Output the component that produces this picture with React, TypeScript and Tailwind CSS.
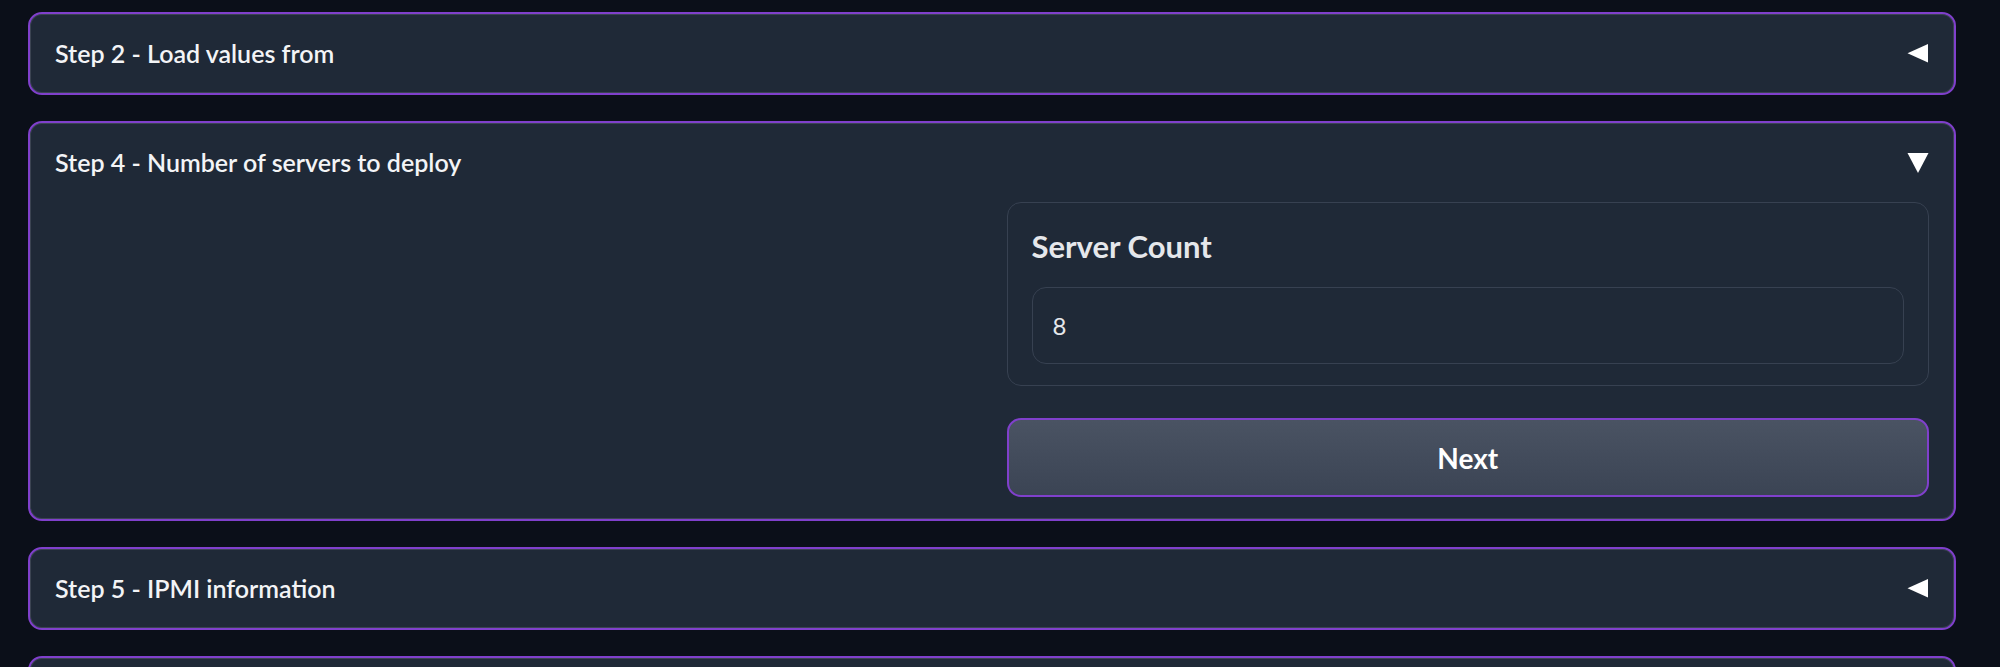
import React from "react";

function Collapsed({ title }: { title?: string }) {
  return (
    <div className="flex h-[83px] items-center justify-between rounded-[14px] border-2 border-[#8040cc] bg-[#1f2937] pl-[25px] pr-[25px] shadow-[inset_0_0_0_1px_#3b4452]">
      <span className="text-[25px] font-semibold text-[#f3f4f6]">{title}</span>
      <svg width="22" height="19" viewBox="0 0 22 19">
        <polygon points="21,0 21,18.5 0.5,9.25" fill="#ffffff" />
      </svg>
    </div>
  );
}

export default function App() {
  return (
    <div className="h-[667px] overflow-hidden bg-[#0b0f19] pl-[28px] pr-[44px] pt-[12px] font-['Lato',sans-serif]">
      <div className="flex flex-col gap-[26px]">
        <Collapsed title="Step 2 - Load values from" />

        <div className="rounded-[14px] border-2 border-[#8040cc] bg-[#1f2937] px-[25px] pb-[22px] shadow-[inset_0_0_0_1px_#3b4452]">
          <div className="flex h-[79px] items-center justify-between">
            <span className="text-[25px] font-semibold text-[#f3f4f6]">Step 4 - Number of servers to deploy</span>
            <svg width="22" height="20" viewBox="0 0 22 20">
              <polygon points="0.5,0 21.5,0 11,20" fill="#ffffff" />
            </svg>
          </div>
          <div className="grid grid-cols-2 gap-[29px]">
            <div />
            <div className="flex flex-col gap-[32px]">
              <div className="rounded-[14px] border border-[#374151] bg-[#1f2937] px-[24px] pb-[21px] pt-[22px]">
                <div className="mb-[20px] text-[31px] font-bold leading-[42px] text-[#e5e7eb]">Server Count</div>
                <div className="flex h-[77px] items-center rounded-[14px] border border-[#374151] bg-[#1f2937] px-[20px]">
                  <span className="text-[24px] text-[#e5e7eb]">8</span>
                </div>
              </div>
              <button className="h-[79px] rounded-[14px] border-2 border-[#8040cc] bg-gradient-to-b from-[#4a5363] to-[#3b4454] text-[28px] font-bold text-white">
                Next
              </button>
            </div>
          </div>
        </div>

        <Collapsed title="Step 5 - IPMI information" />
        <div className="h-[83px] rounded-[14px] border-2 border-[#8040cc] bg-[#1f2937] shadow-[inset_0_0_0_1px_#3b4452]" />
      </div>
    </div>
  );
}
